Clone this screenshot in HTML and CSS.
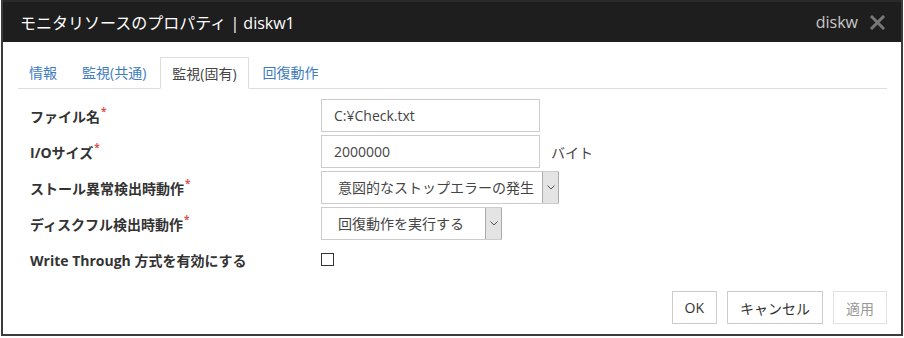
FILE: index.html
```html
<!DOCTYPE html>
<html lang="ja">
<head>
  <meta charset="UTF-8">
  <title>モニタリソースのプロパティ</title>
  <link rel="stylesheet" href="styles.css">
</head>
<body>

<div class="dialog">
  <div class="dialog-header">
    <div class="dialog-title">モニタリソースのプロパティ | diskw1</div>
    <div class="dialog-type">diskw</div>
    <div class="dialog-close">
      <svg width="15" height="15" viewBox="0 0 15 15"><path d="M2 2 L13 13 M13 2 L2 13" stroke="#777" stroke-width="3" stroke-linecap="square"/></svg>
    </div>
  </div>

  <div class="dialog-body">
    <div class="tabs">
      <div class="tab">情報</div>
      <div class="tab">監視(共通)</div>
      <div class="tab active">監視(固有)</div>
      <div class="tab">回復動作</div>
    </div>

    <div class="form">
      <div class="row">
        <div class="label">ファイル名<span class="req">*</span></div>
        <div class="field"><div class="input">C:¥Check.txt</div></div>
      </div>
      <div class="row">
        <div class="label">I/Oサイズ<span class="req">*</span></div>
        <div class="field"><div class="input">2000000</div><span class="unit">バイト</span></div>
      </div>
      <div class="row">
        <div class="label">ストール異常検出時動作<span class="req">*</span></div>
        <div class="field">
          <div class="select wide"><span class="select-text">意図的なストップエラーの発生</span><span class="arrow"><svg width="8" height="5" viewBox="0 0 8 5"><path d="M0.5 0.5 L4 4 L7.5 0.5" fill="none" stroke="#555" stroke-width="1"/></svg></span></div>
        </div>
      </div>
      <div class="row">
        <div class="label">ディスクフル検出時動作<span class="req">*</span></div>
        <div class="field">
          <div class="select narrow"><span class="select-text">回復動作を実行する</span><span class="arrow"><svg width="8" height="5" viewBox="0 0 8 5"><path d="M0.5 0.5 L4 4 L7.5 0.5" fill="none" stroke="#555" stroke-width="1"/></svg></span></div>
        </div>
      </div>
      <div class="row">
        <div class="label">Write Through 方式を有効にする</div>
        <div class="field"><span class="checkbox"></span></div>
      </div>
    </div>

    <div class="buttons">
      <button class="btn">OK</button>
      <button class="btn">キャンセル</button>
      <button class="btn disabled">適用</button>
    </div>
  </div>
</div>

</body>
</html>
```

FILE: styles.css
```css
* {margin:0;padding:0;box-sizing:border-box;}
body {
  background: #fff;
  font-family: "Open Sans", "Noto Sans CJK JP", sans-serif;
  font-size: 14px;
  color: #333;
}
.dialog {
  width: 902px;
  height: 336px;
  margin-left: 1px;
  border: 2px solid #3c3c3c;
  border-top: none;
  background: #fff;
  display: flex;
  flex-direction: column;
}
.dialog-header {
  height: 42px;
  background: #1e1e1e;
  border-top: 2px solid #2a2a2a;
  display: flex;
  align-items: center;
  padding: 0 16px 0 17px;
}
.dialog-title {
  color: #fff;
  font-size: 16px;
  flex: 1;
}
.dialog-type {
  color: #c8c8c8;
  font-size: 16px;
  margin-right: 12px;
}
.dialog-close {
  display: flex;
  align-items: center;
}
.dialog-body {
  flex: 1;
  padding: 15px 14px 0 15px;
  display: flex;
  flex-direction: column;
}
.tabs {
  display: flex;
  border-bottom: 1px solid #ddd;
  height: 32px;
}
.tab {
  padding: 0 11px;
  margin-right: 3px;
  height: 32px;
  line-height: 31px;
  color: #3d7cc0;
  font-size: 14px;
}
.tab.active {
  color: #444;
  border: 1px solid #ddd;
  border-bottom-color: #fff;
  background: #fff;
  padding: 0 11px;
}
.form {
  display: flex;
  flex-direction: column;
  gap: 3px;
  padding: 10px 0 0 12px;
}
.row {
  display: flex;
  align-items: center;
  height: 33px;
}
.label {
  width: 291px;
  font-weight: bold;
  color: #333;
}
.req {
  color: #d9534f;
  font-size: 10px;
  vertical-align: top;
  position: relative;
  top: -2px;
  margin-left: 1px;
}
.field {
  display: flex;
  align-items: center;
}
.input {
  width: 219px;
  height: 33px;
  border: 1px solid #ccc;
  padding: 0 12px;
  line-height: 31px;
  color: #444;
}
.unit {
  margin-left: 11px;
  color: #444;
}
.select {
  height: 33px;
  border: 1px solid #ccc;
  display: flex;
  align-items: stretch;
}
.select.wide { width: 238px; }
.select.narrow { width: 181px; }
.select-text {
  flex: 1;
  padding-left: 16px;
  line-height: 31px;
  color: #444;
}
.arrow {
  width: 17px;
  background: #e4e4e4;
  border-left: 1px solid #ababab;
  border-right: 1px solid #ababab;
  margin: 0 -1px 0 0;
  display: flex;
  align-items: center;
  justify-content: center;
}
.checkbox {
  width: 13px;
  height: 13px;
  border: 1px solid #333;
  background: #fff;
}
.buttons {
  margin-top: auto;
  margin-bottom: 10px;
  display: flex;
  justify-content: flex-end;
  gap: 10px;
}
.btn {
  height: 33px;
  padding: 0 12px;
  border: 1px solid #ccc;
  background: #fff;
  color: #333;
  font-family: "Open Sans", "Noto Sans CJK JP", sans-serif;
  font-size: 14px;
}
.btn.disabled {
  color: #999;
  border-color: #e3e3e3;
}
```
